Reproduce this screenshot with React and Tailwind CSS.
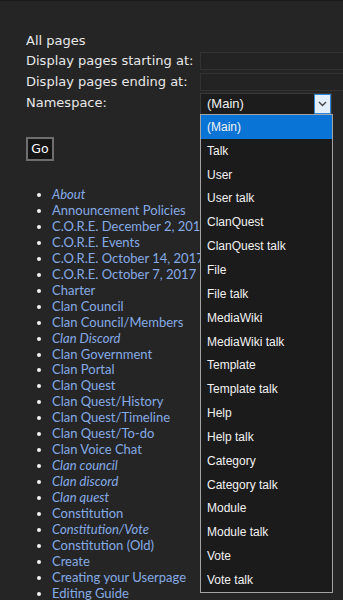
import React from 'react';

const namespaces = [
    '(Main)', 'Talk', 'User', 'User talk', 'ClanQuest', 'ClanQuest talk', 'File', 'File talk',
    'MediaWiki', 'MediaWiki talk', 'Template', 'Template talk', 'Help', 'Help talk',
    'Category', 'Category talk', 'Module', 'Module talk', 'Vote', 'Vote talk',
];

const pages = [
    { title: 'About', redirect: true },
    { title: 'Announcement Policies' },
    { title: 'C.O.R.E. December 2, 2017' },
    { title: 'C.O.R.E. Events' },
    { title: 'C.O.R.E. October 14, 2017' },
    { title: 'C.O.R.E. October 7, 2017' },
    { title: 'Charter' },
    { title: 'Clan Council' },
    { title: 'Clan Council/Members' },
    { title: 'Clan Discord', redirect: true },
    { title: 'Clan Government' },
    { title: 'Clan Portal' },
    { title: 'Clan Quest' },
    { title: 'Clan Quest/History' },
    { title: 'Clan Quest/Timeline' },
    { title: 'Clan Quest/To-do' },
    { title: 'Clan Voice Chat' },
    { title: 'Clan council', redirect: true },
    { title: 'Clan discord', redirect: true },
    { title: 'Clan quest', redirect: true },
    { title: 'Constitution' },
    { title: 'Constitution/Vote', redirect: true },
    { title: 'Constitution (Old)' },
    { title: 'Create' },
    { title: 'Creating your Userpage' },
    { title: 'Editing Guide' },
];

export default function App() {
    return (
        <div className="relative h-[600px] w-[343px] overflow-hidden bg-[#252525] border-t border-[#1b1b1b]">
            <div className="pl-[26px] pt-[29px] text-[13px] text-[#e8e8e8] font-['DejaVu_Sans',sans-serif]">
                {/* Form */}
                <div className="h-[21px] leading-[21px]">All pages</div>
                <div className="flex h-[20px] items-center">
                    <span className="w-[174px] shrink-0 whitespace-nowrap leading-[20px]">Display pages starting at:</span>
                    <div className="h-[18px] w-[160px] shrink-0 border border-[#323232] bg-[#232323]"></div>
                </div>
                <div className="mt-[1px] flex h-[20px] items-center">
                    <span className="w-[174px] shrink-0 whitespace-nowrap leading-[20px]">Display pages ending at:</span>
                    <div className="h-[18px] w-[160px] shrink-0 border border-[#323232] bg-[#232323]"></div>
                </div>
                <div className="mt-[1px] flex h-[22px] items-start">
                    <span className="w-[174px] shrink-0 whitespace-nowrap leading-[20px]">Namespace:</span>
                    <div className="flex h-[22px] w-[132px] shrink-0 items-center border border-[#3a3a3a] bg-[#1c1c1c] font-['Liberation_Sans',sans-serif] text-[13px]">
                        <span className="flex-1 pl-[6px] text-[#f0f0f0]">(Main)</span>
                        <span className="flex h-[20px] w-[17px] items-center justify-center border border-[#2f86dc] bg-[#e3effb]">
                            <svg width="9" height="6" viewBox="0 0 9 6" fill="none">
                                <path d="M1 1l3.5 3.5L8 1" stroke="#444" strokeWidth="1.4" />
                            </svg>
                        </span>
                    </div>
                </div>

                <button className="mt-[22px] flex h-[24px] w-[28px] items-center justify-center border-2 border-[#6e6e6e] bg-[#141414] text-[12.5px] text-white">
                    Go
                </button>

                {/* Page list */}
                <ul className="mt-[26px] ml-[26px] list-disc text-[13px] leading-[15.95px] text-white font-['Lato',sans-serif] marker:text-[#f2f2f2]">
                    {pages.map((p) => (
                        <li key={p.title} className="whitespace-nowrap">
                            <a className={`text-[#85abe6] ${p.redirect ? 'italic' : ''}`}>{p.title}</a>
                        </li>
                    ))}
                </ul>
            </div>

            {/* Open select list */}
            <div className="absolute left-[200px] top-[113px] w-[133px] border border-[#a3a3a3] bg-[#1b1b1b] font-['Liberation_Sans',sans-serif] text-[12px] text-[#f2f2f2]">
                {namespaces.map((n, i) => (
                    <div
                        key={n}
                        className={`flex h-[23.85px] items-center pl-[6px] ${i === 0 ? 'bg-[#0a74d6]' : ''}`}
                    >
                        {n}
                    </div>
                ))}
            </div>
        </div>
    );
}
